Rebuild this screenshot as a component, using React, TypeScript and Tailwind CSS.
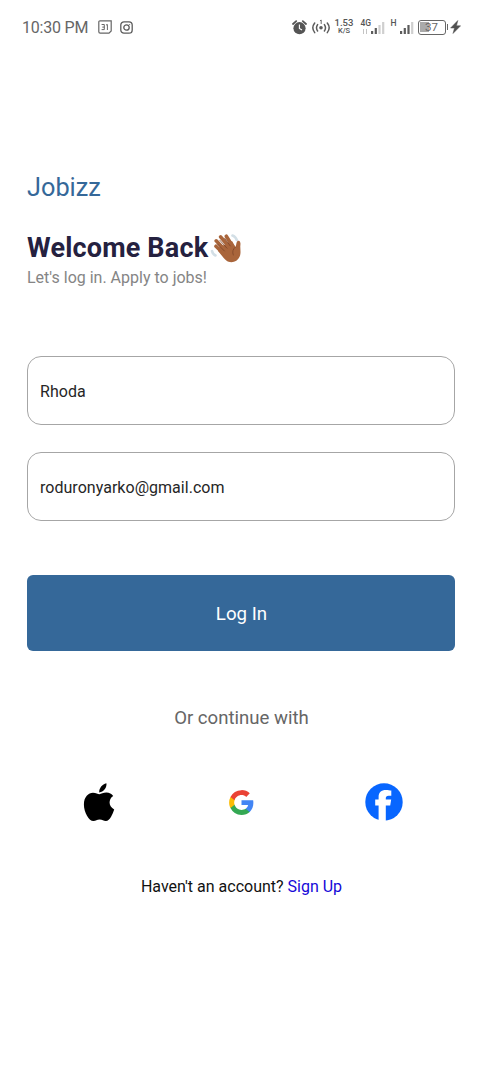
function CalendarIcon() {
  return (
    <svg className="ml-[10px] h-[14px] w-[14px]" viewBox="0 0 14 14" fill="none" stroke="#666" strokeWidth="1.2">
      <path d="M2 .8H13.2V11L11 13.2H2.2A1.4 1.4 0 0 1 .8 11.8V2A1.2 1.2 0 0 1 2 .8Z" />
      <path d="M3.6 4.5H6.3V9.6H3.6M4.3 7.1H6.3M8 5L9.4 4.5V10" strokeWidth="1" />
    </svg>
  );
}

function InstagramIcon() {
  return (
    <svg className="ml-[8px] h-[13px] w-[13px]" viewBox="0 0 13 13" fill="none" stroke="#5c5c5c" strokeWidth="1.3">
      <rect x=".8" y=".8" width="11.4" height="11.4" rx="3.2" />
      <circle cx="6.5" cy="6.5" r="2.7" />
      <circle cx="9.7" cy="3.4" r=".5" fill="#5c5c5c" stroke="none" />
    </svg>
  );
}

function AlarmIcon() {
  return (
    <svg className="h-[15px] w-[15px]" viewBox="0 0 15 15" fill="none">
      <circle cx="7.5" cy="8.2" r="6.1" fill="#555" />
      <path d="M1 4L4.2 1.1M14 4L10.8 1.1" stroke="#555" strokeWidth="1.8" strokeLinecap="round" />
      <path d="M7.4 4.6V8.5L10 10" stroke="#fff" strokeWidth="1.1" />
    </svg>
  );
}

function HotspotIcon() {
  return (
    <svg className="ml-[4px] h-[17px] w-[20px]" viewBox="0 0 20 17" fill="none" stroke="#5c5c5c" strokeWidth="1.5" strokeLinecap="round">
      <circle cx="10" cy="8.8" r="1.8" fill="#5c5c5c" stroke="none" />
      <path d="M6.6 5.6Q4.4 8.8 6.6 12M13.4 5.6Q15.6 8.8 13.4 12M3.7 4Q-.1 8.8 3.7 13.6M16.3 4Q20.1 8.8 16.3 13.6" />
      <path d="M9.3 1.6L10.2 1V4.6" strokeWidth=".9" />
    </svg>
  );
}

function SignalBars({ strong }: { strong: number }) {
  const heights = [3, 6, 9, 12];
  return (
    <svg className="h-[13px] w-[14px]" viewBox="0 0 14 13">
      {heights.map((h, i) => (
        <rect key={h} x={i * 3.7} y={13 - h} width="2.2" height={h} fill={i < strong ? "#5c5c5c" : "#cfcfcf"} />
      ))}
    </svg>
  );
}

function StatusBar() {
  return (
    <div className="flex h-[54px] items-center pr-[21px] pl-[22px] text-[#666]">
      <span className="mt-[2px] w-[66px] text-[16px] leading-[20px] tracking-[-0.2px] whitespace-nowrap">10:30 PM</span>
      <CalendarIcon />
      <InstagramIcon />
      <div className="ml-auto flex items-center">
        <AlarmIcon />
        <HotspotIcon />
        <div className="mb-[2px] ml-[4px] flex w-[19px] flex-col items-center text-[#555]">
          <span className="text-[9.5px] leading-[9px] font-medium">1.53</span>
          <span className="text-[7.5px] leading-[8px] font-medium">K/S</span>
        </div>
        <div className="mb-[2px] ml-[7px] flex h-[16px] items-end">
          <div className="flex h-[16px] w-[10px] flex-col text-[#555]">
            <span className="mt-[1px] text-[8.5px] leading-[9px] font-medium">4G</span>
            <svg className="mt-px ml-px h-[5px] w-[7px]" viewBox="0 0 7 5" stroke="#c4c4c4" fill="none">
              <path d="M1.5 0V5M4.5 0V5" />
            </svg>
          </div>
          <SignalBars strong={2} />
        </div>
        <div className="mb-[2px] ml-[6px] flex h-[16px] items-end">
          <span className="h-[16px] w-[9px] pt-[1px] text-[8.5px] leading-[9px] font-medium text-[#555]">H</span>
          <SignalBars strong={3} />
        </div>
        <div className="ml-[4px] flex h-[15px] w-[28px] items-center rounded-[3px] border-[1.5px] border-[#666] p-[1.5px]">
          <div className="relative flex h-full w-full items-center justify-center">
            <div className="absolute top-0 left-0 h-full w-[9px] bg-[#aaa]" />
            <span className="relative text-[11.5px] leading-[11px]">37</span>
          </div>
        </div>
        <div className="ml-[1px] h-[6px] w-[1.5px] bg-[#666]" />
        <svg className="ml-[2px] h-[14px] w-[11px]" viewBox="0 0 11 14">
          <path d="M7.8.5L.6 8H4.5L3 13.5L10.6 5.8H6.5Z" fill="#505050" stroke="#505050" strokeWidth=".5" />
        </svg>
      </div>
    </div>
  );
}

function WavingHand() {
  return (
    <svg className="ml-[2px] h-[32px] w-[32px]" viewBox="0 0 32 32" fill="none" strokeLinecap="round">
      <path d="M22.5 3.5Q25.5 4.5 26.8 8M2 19Q2.5 22 5.5 23.5" stroke="#d3dfe6" strokeWidth="2.6" />
      <path d="M6 14.2L14 22M6.2 8.8L16 19M10.6 4.8L20 16M16.3 4.2L23 15" stroke="#a9653b" strokeWidth="3.6" />
      <path d="M8 16L22 9L25.5 15C26.6 12.8 26 10.5 27.5 9C29.7 7.8 30.8 10 30.4 13C29.9 16.5 31.3 20.3 29.8 24.3C27.5 30 20.8 32.2 16 28.3C13.5 26.2 11 22.5 8 19Z" fill="#a9653b" />
      <path d="M7.5 12L14.4 19M9.8 8.2L17 16.2M14.6 6.2L20.2 13.9M25.5 15Q21.3 18.2 23.3 23" stroke="#7d4528" strokeWidth=".8" />
    </svg>
  );
}

function AppleLogo() {
  return (
    <svg className="ml-px h-[40px] w-[32px]" viewBox="0 0 32 40" fill="#000">
      <path d="M16.2 10.4C16 6.3 19.2 2.2 23.4 1.3C24.2 5.4 20.4 10.2 16.2 10.4Z" />
      <path d="M16.4 12.2C18.2 12.2 20.2 10.6 23.4 10.6C26.4 10.6 28.7 12 30.2 14.1C25.2 17.2 25.3 24.8 31.2 27.4C29.9 31.2 27 38.9 22.9 39C20.4 39 19.5 37.6 16.7 37.6C13.8 37.6 12.8 38.9 10.5 39C6.1 39.1.9 30.4.9 22.4C.9 14.9 5.5 10.8 10 10.8C12.9 10.8 14.9 12.2 16.4 12.2Z" />
    </svg>
  );
}

function GoogleLogo() {
  return (
    <svg className="ml-px h-[27px] w-[27px]" viewBox="0 0 24 24">
      <path fill="#4285F4" d="M22.56 12.25c0-.78-.07-1.53-.2-2.25H12v4.26h5.92a5.06 5.06 0 0 1-2.2 3.32v2.77h3.57c2.08-1.92 3.27-4.74 3.27-8.1z" />
      <path fill="#34A853" d="M12 23c2.97 0 5.46-.98 7.28-2.66l-3.57-2.77c-.98.66-2.23 1.06-3.71 1.06-2.86 0-5.29-1.93-6.16-4.53H2.18v2.84A11 11 0 0 0 12 23z" />
      <path fill="#FBBC05" d="M5.84 14.09A6.6 6.6 0 0 1 5.49 12c0-.73.13-1.43.35-2.09V7.07H2.18A11 11 0 0 0 1 12c0 1.78.43 3.45 1.18 4.93l3.66-2.84z" />
      <path fill="#EA4335" d="M12 5.38c1.62 0 3.06.56 4.21 1.64l3.15-3.15A10.6 10.6 0 0 0 12 1 11 11 0 0 0 2.18 7.07l3.66 2.84C6.71 7.31 9.14 5.38 12 5.38z" />
    </svg>
  );
}

function FacebookLogo() {
  return (
    <svg className="h-[38px] w-[38px]" viewBox="0 0 38 38">
      <circle cx="19" cy="19" r="18.7" fill="#0866ff" />
      <path fill="#fff" d="M13.6 38V22.6H10.2V16.6H13.6V14.2C13.6 9.2 16.2 6.9 21 6.9C22.9 6.9 25 7.2 26.3 7.6V12.7H23.6C21.6 12.7 20.8 13.6 20.8 15.3V16.6H26.2L25.2 22.6H20.8V38Z" />
    </svg>
  );
}

function Field({ value }: { value: string }) {
  return (
    <div className="flex h-[69px] items-center rounded-[14px] border border-[#a6a6a6] px-[12px] pt-[2px] text-[16px] leading-[20px] tracking-[0.03px] text-[#262626]">
      {value}
    </div>
  );
}

export default function App() {
  return (
    <div className="h-[1080px] w-[482px] overflow-hidden bg-white font-['Roboto',sans-serif]">
      <StatusBar />
      <main className="flex flex-col px-[27px] pt-[119px]">
        <div className="text-[25.3px] leading-[30px] text-[#356899]">Jobizz</div>
        <h1 className="mt-[29px] flex h-[32px] items-center text-[27px] leading-[32px] font-bold tracking-[0.18px] whitespace-nowrap text-[#25213f]">
          Welcome Back
          <WavingHand />
        </h1>
        <p className="mt-[4px] text-[16px] leading-[20px] text-[#858585]">Let's log in. Apply to jobs!</p>
        <div className="mt-[68px] flex flex-col gap-[27px]">
          <Field value="Rhoda" />
          <Field value="roduronyarko@gmail.com" />
        </div>
        <button className="mt-[54px] h-[76px] rounded-[6px] bg-[#356899] pt-[2px] pl-px text-[18.7px] leading-[24px] text-white">
          Log In
        </button>
        <p className="mt-[55px] pl-px text-center text-[18.6px] leading-[24px] text-[#666]">Or continue with</p>
        <div className="mt-[52px] grid h-[40px] grid-cols-3 place-items-center">
          <AppleLogo />
          <GoogleLogo />
          <FacebookLogo />
        </div>
        <p className="mt-[55px] pl-px text-center text-[16px] leading-[20px] text-[#111]">
          Haven't an account? <span className="text-[#1508d8]">Sign Up</span>
        </p>
      </main>
    </div>
  );
}
